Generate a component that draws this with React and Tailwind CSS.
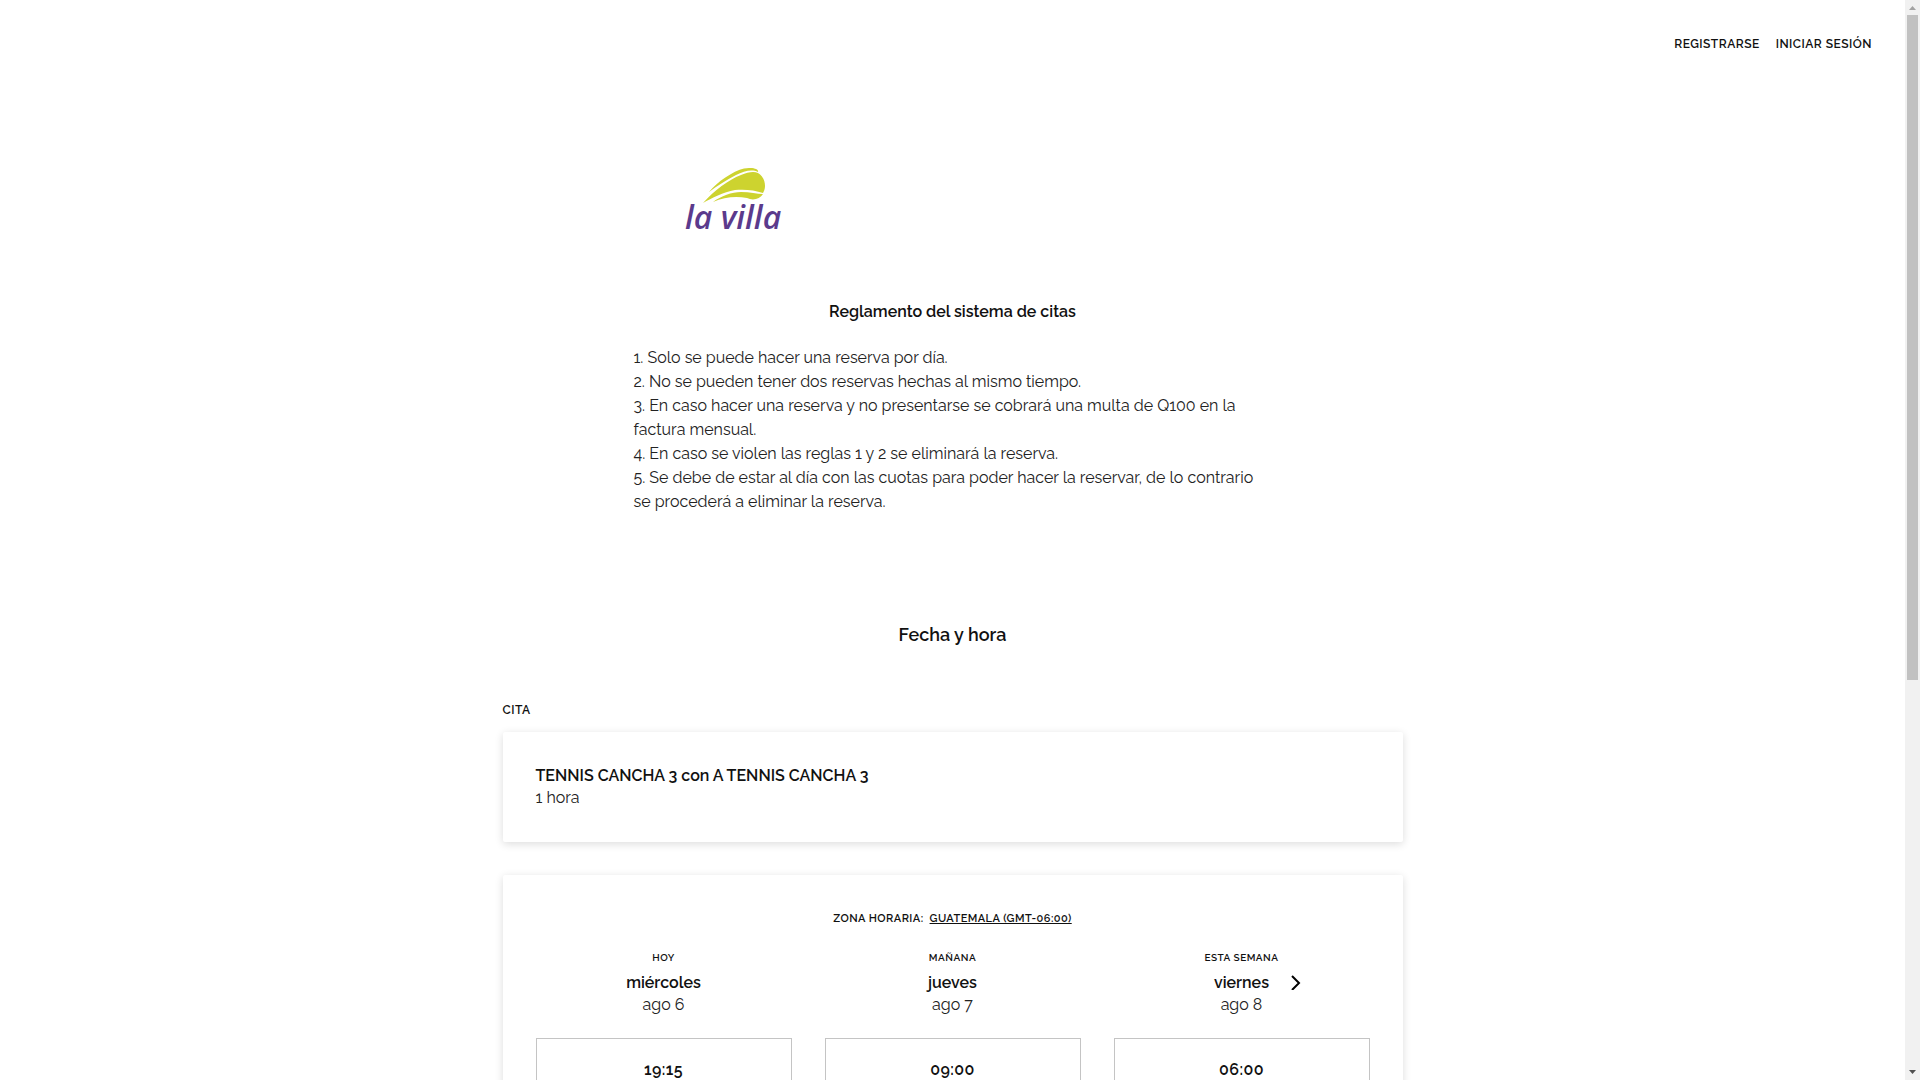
import React from "react";

const rules = [
  "1. Solo se puede hacer una reserva por día.",
  "2. No se pueden tener dos reservas hechas al mismo tiempo.",
  "3. En caso hacer una reserva y no presentarse se cobrará una multa de Q100 en la factura mensual.",
  "4. En caso se violen las reglas 1 y 2 se eliminará la reserva.",
  "5. Se debe de estar al día con las cuotas para poder hacer la reservar, de lo contrario se procederá a eliminar la reserva.",
];

const days = [
  { label: "Hoy", day: "miércoles", date: "ago 6", times: ["19:15"] },
  { label: "Mañana", day: "jueves", date: "ago 7", times: ["09:00"] },
  { label: "Esta semana", day: "viernes", date: "ago 8", times: ["06:00"] },
];

function Logo() {
  return (
    <svg className="ml-12 block h-[80px] w-[104px]" viewBox="0 0 104 80" role="img" aria-label="la villa">
      <path d="M27 24C35 14 51 3 62 .5C71-1 77 1 76 4C70 1 62 3 54 7C44 12 35 18 27 24Z" fill="#cdd32f" />
      <path d="M21 35C33 22 46 12 59 7C66 4 72 3 76 5C81 8 83 13 83 18C83 21 82 23 81 25C73 22 62 21 53 22C41 24 30 30 21 35Z" fill="#cdd32f" />
      <path d="M31 34C39 28 50 24 59 24C68 24 75 26 81 26C78 31 71 33 65 30C54 28 42 29 31 34Z" fill="#cdd32f" />
      <text x="3" y="61" fill="#5b3a8c" className="font-['Open_Sans',sans-serif] text-[32px] font-semibold italic">la villa</text>
    </svg>
  );
}

function Day({ label, day, date, times, last }) {
  return (
    <div className="flex flex-col text-center">
      <div className="text-[10px] leading-4 font-semibold tracking-wider uppercase">{label}</div>
      <div className="relative mx-auto mt-1.5 text-base leading-[22px] font-semibold">
        {day}
        {last && (
          <button type="button" aria-label="Siguiente" className="absolute top-0.5 left-full ml-5">
            <svg className="h-4 w-4" viewBox="0 0 16 16" fill="none" stroke="#000" strokeWidth="2">
              <path d="M3 2L10 9L3 16" />
            </svg>
          </button>
        )}
      </div>
      <div className="text-base leading-[22px] text-[#222]">{date}</div>
      <div className="mt-[22px] flex flex-col gap-4">
        {times.map((t) => (
          <button key={t} type="button" className="h-16 border border-[#c4c4c4] text-base font-semibold tracking-wide">
            {t}
          </button>
        ))}
      </div>
    </div>
  );
}

function Scrollbar() {
  return (
    <div aria-hidden="true" className="flex w-[15px] shrink-0 flex-col items-center justify-between bg-[#f1f1f1]">
      <svg className="h-[15px] w-[15px] shrink-0" viewBox="0 0 15 15">
        <path d="M4 10H11L7.5 6Z" fill="#a3a3a3" />
      </svg>
      <div className="min-h-0 w-full flex-1 px-0.5">
        <div className="h-[63.3%] bg-[#c1c1c1]" />
      </div>
      <svg className="h-[15px] w-[15px] shrink-0" viewBox="0 0 15 15">
        <path d="M4 5H11L7.5 9Z" fill="#505050" />
      </svg>
    </div>
  );
}

export default function App() {
  return (
    <div className="flex h-screen overflow-hidden bg-white font-['Raleway','Lato',sans-serif] text-[#111]">
      <div className="min-w-0 flex-1 overflow-hidden">
        <header className="flex justify-end gap-4 px-[33px] pt-8">
          <a href="#registrarse" className="text-xs leading-6 font-semibold tracking-[0.04em] uppercase">Registrarse</a>
          <a href="#iniciar" className="text-xs leading-6 font-semibold tracking-[0.04em] uppercase">Iniciar sesión</a>
        </header>

        <section className="mx-auto w-full max-w-[638px] pt-28">
          <Logo />
          <h1 className="mt-[52px] text-center text-base leading-6 font-semibold">Reglamento del sistema de citas</h1>
          <div className="mt-[22px] text-base leading-6 text-[#222]">
            {rules.map((r) => (
              <p key={r}>{r}</p>
            ))}
          </div>
        </section>

        <main className="mx-auto mt-[109px] w-full max-w-[900px]">
          <h2 className="text-center text-lg leading-6 font-semibold">Fecha y hora</h2>
          <h3 className="mt-[51px] text-xs leading-6 font-semibold tracking-[0.04em] uppercase">Cita</h3>
          <div className="mt-[10px] rounded-xs border border-transparent bg-white px-8 py-8 shadow-[0_2px_8px_rgba(0,0,0,0.14)]">
            <div className="text-base leading-[22px] font-semibold">TENNIS CANCHA 3 con A TENNIS CANCHA 3</div>
            <div className="text-base leading-[22px] text-[#222]">1 hora</div>
          </div>

          <div className="mt-[33px] rounded-xs border border-transparent bg-white px-8 pt-[31px] pb-24 shadow-[0_2px_8px_rgba(0,0,0,0.14)]">
            <div className="flex justify-center gap-1.5 text-[11px] leading-6 font-semibold tracking-[0.04em] uppercase">
              <span>Zona horaria:</span>
              <button type="button" className="tracking-[0.04em] uppercase underline underline-offset-1">Guatemala (GMT-06:00)</button>
            </div>
            <div className="mt-[19px] grid grid-cols-3 gap-[33px]">
              {days.map((d, i) => (
                <Day key={d.label} {...d} last={i === days.length - 1} />
              ))}
            </div>
          </div>
        </main>
      </div>
      <Scrollbar />
    </div>
  );
}
